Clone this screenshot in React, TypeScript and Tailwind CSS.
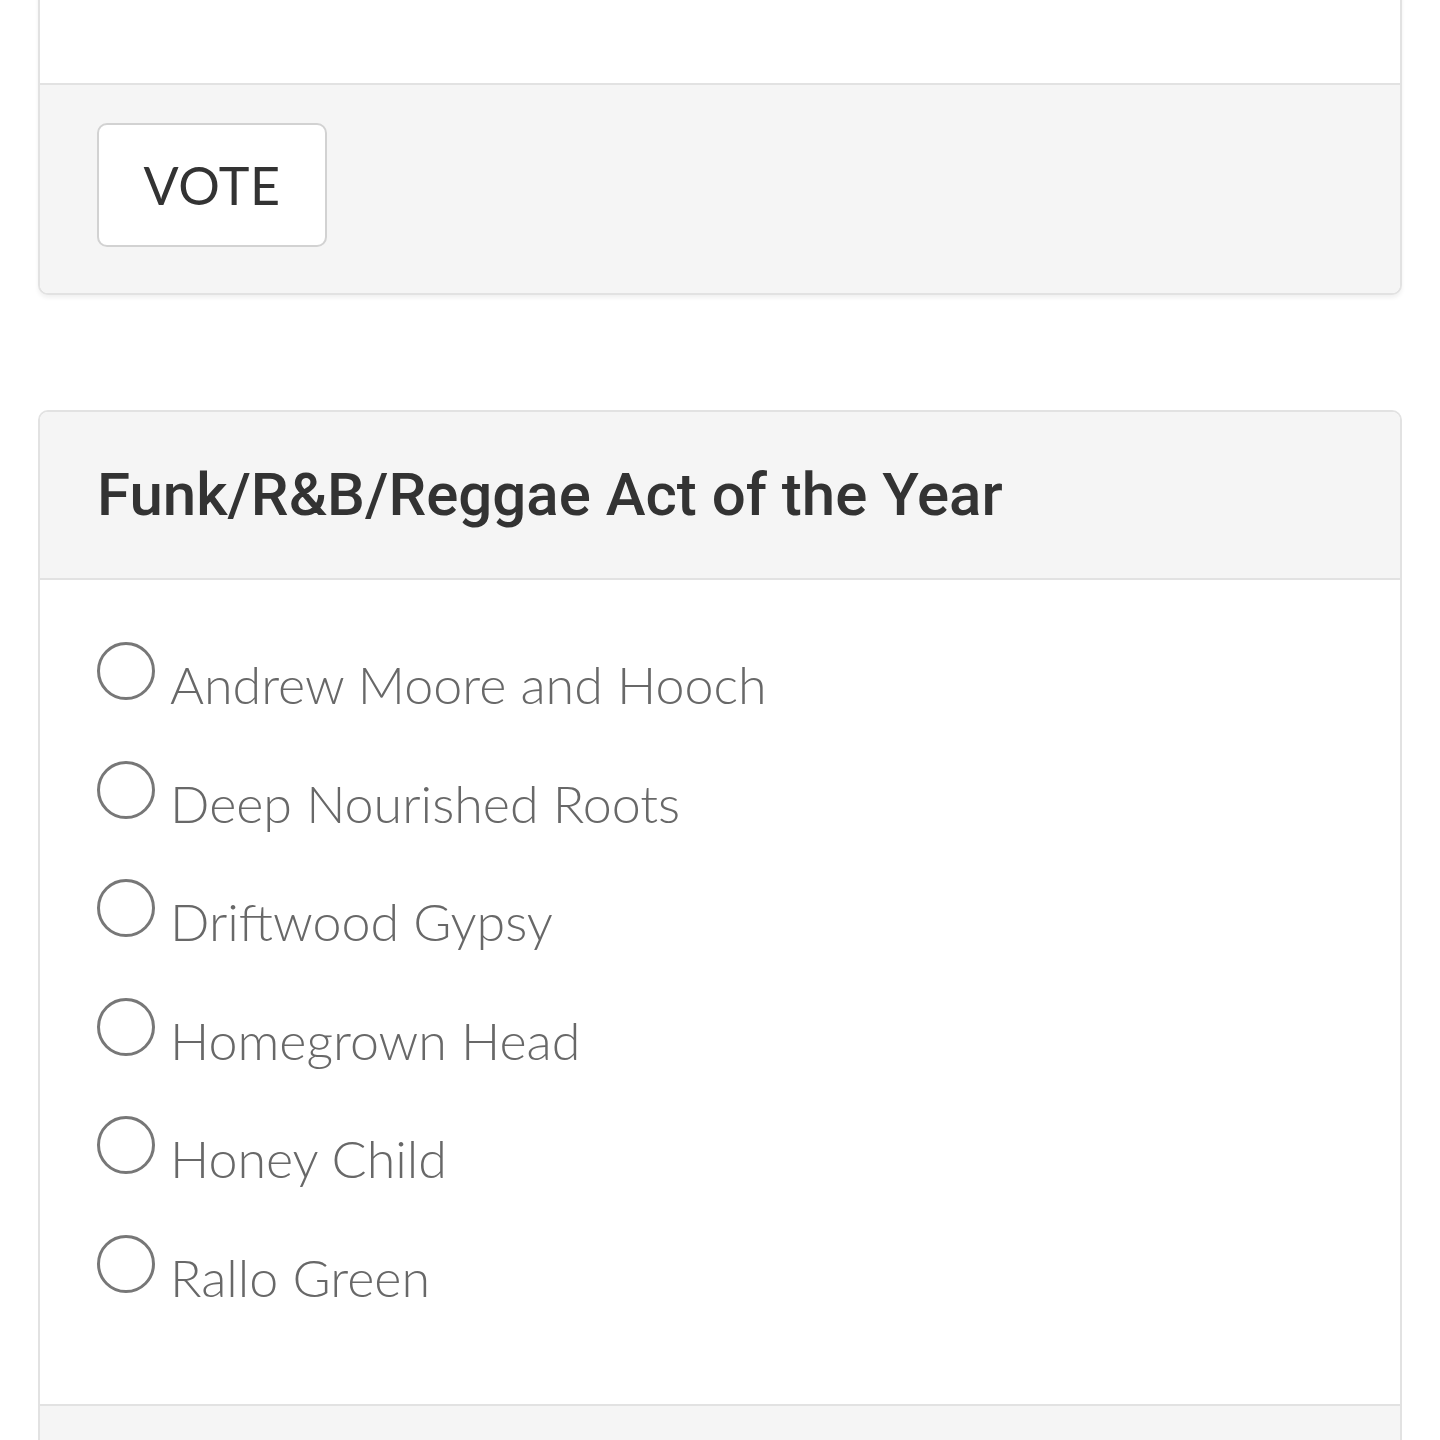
import React from 'react'

const options = [
  'Andrew Moore and Hooch',
  'Deep Nourished Roots',
  'Driftwood Gypsy',
  'Homegrown Head',
  'Honey Child',
  'Rallo Green',
]

export default function App() {
  return (
    <div className="min-h-[1440px] bg-white px-[38px] overflow-hidden" style={{ fontFamily: 'Lato, "Noto Sans", sans-serif' }}>
      {/* Previous category card (footer with vote button) */}
      <div className="mt-[-60px] rounded-[10px] border-2 border-[#e2e2e2] bg-white shadow-[0_3px_4px_rgba(0,0,0,0.06)] overflow-hidden">
        <div className="h-[141px] bg-white" />
        <div className="border-t-2 border-[#e2e2e2] bg-[#f5f5f5] pl-[57px] pt-[38px] pb-[46px]">
          <button className="flex h-[124px] w-[230px] items-center justify-center rounded-[10px] border-2 border-[#d2d2d2] bg-white text-[52px] text-[#333] tracking-[0.5px]">
            VOTE
          </button>
        </div>
      </div>

      {/* Funk/R&B/Reggae card */}
      <div className="mt-[115px] rounded-[10px] border-2 border-[#e2e2e2] bg-white overflow-hidden">
        <div className="flex h-[166px] items-center bg-[#f5f5f5] pl-[57px]">
          <h2
            className="text-[60px] font-medium text-[#333] leading-none"
            style={{ fontFamily: 'Roboto, "Noto Sans", sans-serif' }}
          >
            Funk/R&amp;B/Reggae Act of the Year
          </h2>
        </div>
        <div className="border-t-2 border-[#e2e2e2] pl-[57px] pt-[62px] pb-[50px]">
          {options.map((o) => (
            <label key={o} className="flex h-[118.6px] items-start">
              <span className="block h-[58px] w-[58px] shrink-0 rounded-full border-[3px] border-[#777]" />
              <span className="ml-[15px] mt-[16px] text-[52px] font-light leading-none text-[#686868]">{o}</span>
            </label>
          ))}
        </div>
        <div className="h-[60px] border-t-2 border-[#e2e2e2] bg-[#f5f5f5]" />
      </div>
    </div>
  )
}
